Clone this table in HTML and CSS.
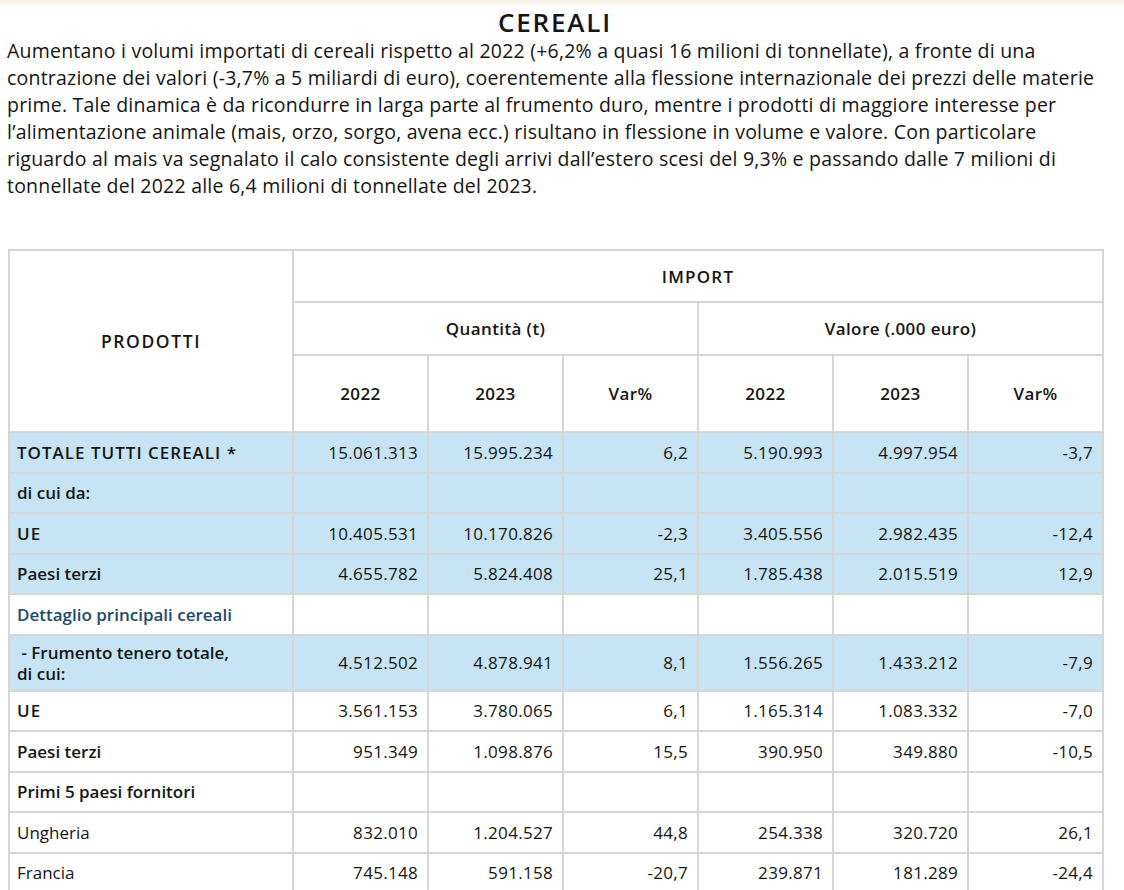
FILE: index.html
```html
<!DOCTYPE html>
<html lang="it">
<head>
<meta charset="utf-8">
<title>Cereali</title>
<link rel="stylesheet" href="styles.css">
</head>
<body>
<div class="topbar"></div>
<h1 class="title">CEREALI</h1>
<p class="intro">Aumentano i volumi importati di cereali rispetto al 2022 (+6,2% a quasi 16 milioni di tonnellate), a fronte di una<br>contrazione dei valori (-3,7% a 5 miliardi di euro), coerentemente alla flessione internazionale dei prezzi delle materie<br>prime. Tale dinamica è da ricondurre in larga parte al frumento duro, mentre i prodotti di maggiore interesse per<br>l’alimentazione animale (mais, orzo, sorgo, avena ecc.) risultano in flessione in volume e valore. Con particolare<br>riguardo al mais va segnalato il calo consistente degli arrivi dall’estero scesi del 9,3% e passando dalle 7 milioni di<br>tonnellate del 2022 alle 6,4 milioni di tonnellate del 2023.</p>

<table class="data">
  <colgroup>
    <col class="c-name"><col class="c-num"><col class="c-num"><col class="c-num"><col class="c-num"><col class="c-num"><col class="c-num">
  </colgroup>
  <thead>
    <tr class="h1"><th rowspan="3" class="prod">PRODOTTI</th><th colspan="6" class="caps">IMPORT</th></tr>
    <tr class="h2"><th colspan="3">Quantità (t)</th><th colspan="3">Valore (.000 euro)</th></tr>
    <tr class="h3"><th>2022</th><th>2023</th><th class="var">Var%</th><th>2022</th><th>2023</th><th class="var">Var%</th></tr>
  </thead>
  <tbody>
    <tr class="blue"><td class="lbl caps">TOTALE TUTTI CEREALI *</td><td>15.061.313</td><td>15.995.234</td><td>6,2</td><td>5.190.993</td><td>4.997.954</td><td>-3,7</td></tr>
    <tr class="blue"><td class="lbl">di cui da:</td><td></td><td></td><td></td><td></td><td></td><td></td></tr>
    <tr class="blue"><td class="lbl caps">UE</td><td>10.405.531</td><td>10.170.826</td><td>-2,3</td><td>3.405.556</td><td>2.982.435</td><td>-12,4</td></tr>
    <tr class="blue"><td class="lbl">Paesi terzi</td><td>4.655.782</td><td>5.824.408</td><td>25,1</td><td>1.785.438</td><td>2.015.519</td><td>12,9</td></tr>
    <tr><td class="lbl section">Dettaglio principali cereali</td><td></td><td></td><td></td><td></td><td></td><td></td></tr>
    <tr class="blue tall"><td class="lbl two">&nbsp;- Frumento tenero totale,<br>di cui:</td><td>4.512.502</td><td>4.878.941</td><td>8,1</td><td>1.556.265</td><td>1.433.212</td><td>-7,9</td></tr>
    <tr><td class="lbl caps">UE</td><td>3.561.153</td><td>3.780.065</td><td>6,1</td><td>1.165.314</td><td>1.083.332</td><td>-7,0</td></tr>
    <tr><td class="lbl">Paesi terzi</td><td>951.349</td><td>1.098.876</td><td>15,5</td><td>390.950</td><td>349.880</td><td>-10,5</td></tr>
    <tr><td class="lbl">Primi 5 paesi fornitori</td><td></td><td></td><td></td><td></td><td></td><td></td></tr>
    <tr><td class="lbl plain">Ungheria</td><td>832.010</td><td>1.204.527</td><td>44,8</td><td>254.338</td><td>320.720</td><td>26,1</td></tr>
    <tr><td class="lbl plain">Francia</td><td>745.148</td><td>591.158</td><td>-20,7</td><td>239.871</td><td>181.289</td><td>-24,4</td></tr>
  </tbody>
</table>
</body>
</html>
```

FILE: styles.css
```css
html, body {
  margin: 0;
  padding: 0;
  background: #ffffff;
}

body {
  font-family: "Open Sans", Lato, "Liberation Sans", sans-serif;
  color: #151515;
  overflow: hidden;
}

.topbar {
  height: 7px;
  background: linear-gradient(to bottom, #f4efe4 0%, #faf7f0 50%, #ffffff 100%);
}

.title {
  margin: 0;
  padding-right: 14px;
  font-size: 26px;
  line-height: 30px;
  font-weight: 600;
  letter-spacing: 1.8px;
  text-align: center;
}

.intro {
  margin: 0;
  padding: 0 7px;
  font-size: 19.5px;
  line-height: 27px;
  white-space: nowrap;
  letter-spacing: 0.22px;
}

.data {
  margin: 50px 0 0 8px;
  width: 1094px;
  border-collapse: collapse;
  table-layout: fixed;
  font-size: 17px;
}

.c-name { width: 284px; }
.c-num { width: 135px; }

.data th,
.data td {
  border: 2px solid #d6d6d6;
  padding: 0 8px;
}

.data th {
  font-weight: 600;
  text-align: center;
  letter-spacing: 0.4px;
}

.data th.caps { letter-spacing: 1.2px; }
.data th.prod { letter-spacing: 1.6px; font-size: 17.5px; }

.h1 { height: 52px; }
.h2 { height: 53px; }
.h3 { height: 77px; }

.data td {
  height: 38.5px;
  text-align: right;
  vertical-align: middle;
  padding-right: 9px;
  letter-spacing: 0.3px;
}

.data tbody tr.tall td { height: 54px; }

.data td.lbl {
  text-align: left;
  font-weight: 600;
  padding-left: 7px;
  letter-spacing: 0;
}

.data td.lbl.caps { letter-spacing: 1px; }

.data td.lbl.plain { font-weight: 400; }

.data td.section { color: #1c4a6e; }

.data td.two { line-height: 21px; }

.blue td { background: #c6e4f4; }
```
